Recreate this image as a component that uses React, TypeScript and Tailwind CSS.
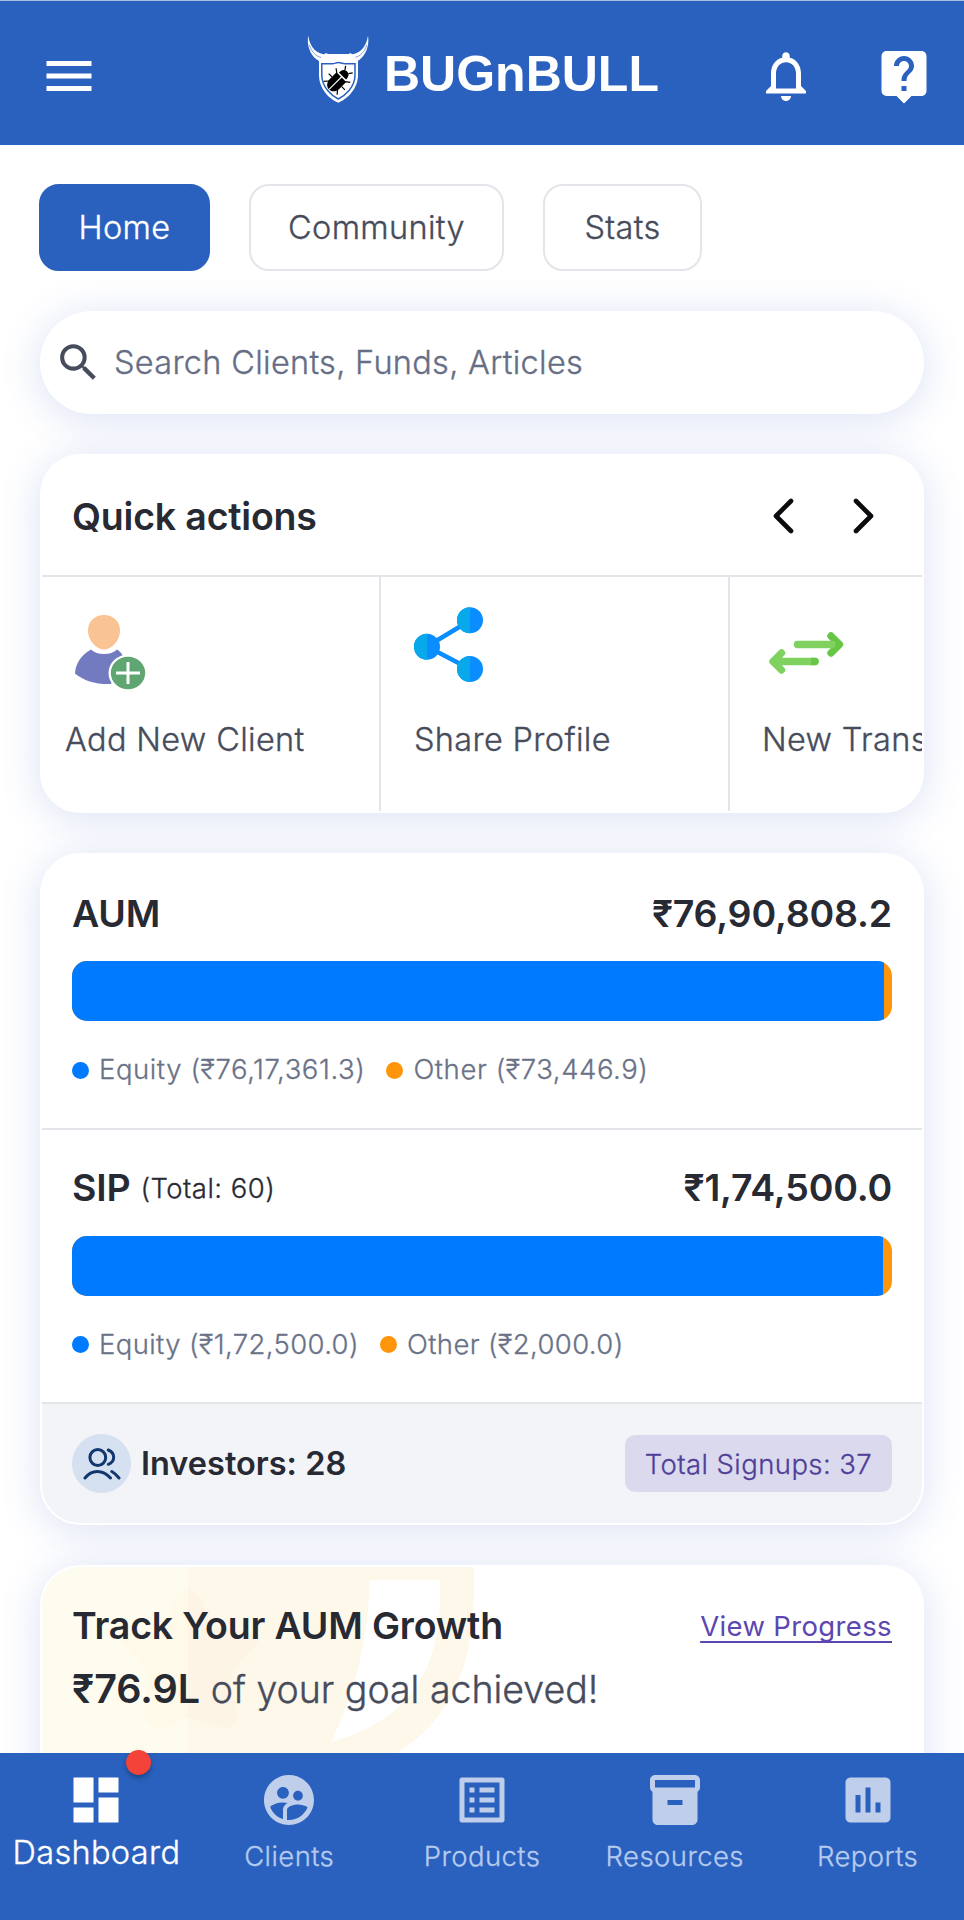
import type { ReactNode } from "react";
import {
  MdAssessment,
  MdDashboard,
  MdInventory2,
  MdListAlt,
  MdLiveHelp,
  MdMenu,
  MdNotificationsNone,
  MdSearch,
  MdSupervisedUserCircle,
} from "react-icons/md";

function BullLogo() {
  return (
    <svg className="mb-[12px] h-[70px] w-[62px] shrink-0" viewBox="0 0 62 70" fill="none">
      <path d="M1.200 .8C-.4 10 3 22 13 26.500L20 19.500C10 19.500 3 13 1.200.8Z" fill="#fff" />
      <path d="M61 .8C62.600 10 59 22 49.500 26.500L42.500 19.500C52 19.500 59.200 13 61 .8Z" fill="#fff" />
      <path d="M2.500 10C4.500 17 9 21.500 14.500 22.500M59.700 10C57.700 17 53 21.500 47.700 22.500" stroke="#2a61be" strokeWidth=".6" />
      <path d="M17 19.500L19 18 21 19H41.500L43.500 18 45.500 19.500 51 25V40C51 55 38.500 65 31.300 67.700 24 65 12 55 12 40V25Z" fill="#fff" />
      <path
        d="M14.800 28.800H25C28 28.800 29 27.500 31.300 27.500S35 28.800 38 28.800H48V40C48 52.500 37.500 61 31.300 64 25 61 14.800 52.500 14.800 40Z"
        stroke="#2a61be"
        strokeWidth="1.500"
      />
      <g transform="translate(30.500 46) rotate(45)">
        <path
          d="M-6-5L-10-8M-7 1H-11.500M-6 6L-9.500 10M6-5L10-8M7 1H11.500M6 6L9.500 10M-2.500-13L-5-16.500M2.500-13L5-16.500"
          stroke="#000"
          strokeWidth="1.200"
        />
        <path d="M-6.800-5.500H6.800V4C6.800 9 3.500 12 0 12S-6.800 9-6.800 4Z" fill="#000" />
        <path d="M-5-7C-5-11.500-3-13.500 0-13.500S5-11.500 5-7Z" fill="#000" />
        <path d="M0-6V12" stroke="#fff" strokeWidth="1.100" />
      </g>
    </svg>
  );
}

function AddClientIcon() {
  return (
    <svg className="h-[76px] w-[72px]" viewBox="0 0 72 76">
      <path d="M16 34.500C6 40 .5 49 0 58.500 9 66 21 69.500 36 69L48 41C46.500 38 44.500 36 42 34.500 36 40.500 22 40.500 16 34.500Z" fill="#727bc0" />
      <path d="M29 0C38 0 45 6 45 15.500S37 34.500 29 34.500 13 25 13 15.500 20 0 29 0Z" fill="#f9c394" />
      <ellipse cx="53" cy="58" rx="19.500" ry="18.500" fill="#fff" />
      <ellipse cx="53" cy="58" rx="17.200" ry="16.200" fill="#5fa673" />
      <path d="M53 47V69M41 58H65" stroke="#fff" strokeWidth="3" />
    </svg>
  );
}

function ShareIcon() {
  return (
    <svg className="h-[76px] w-[70px]" viewBox="0 0 70 76">
      <path d="M13 39.500L56 13.500M13 39.500L56 62" stroke="#0a8dff" strokeWidth="4.500" />
      <g fill="#0a8dff">
        <circle cx="13" cy="39.700" r="13" />
        <circle cx="56" cy="13.300" r="13" />
        <circle cx="56" cy="62" r="13" />
      </g>
      <path d="M13 26.700a13 13 0 0 0 0 26ZM56 .3a13 13 0 0 0 0 26ZM56 49a13 13 0 0 0 0 26Z" fill="#08a9ea" />
    </svg>
  );
}

function TransferIcon() {
  return (
    <svg className="h-[42px] w-[76px]" viewBox="0 0 76 42" fill="none" strokeWidth="7.400" strokeLinecap="round" strokeLinejoin="round">
      <path d="M62 4L70.500 12.500L62 21" stroke="#67c744" />
      <path d="M28.500 12.500H63" stroke="#7fd160" />
      <path d="M12.500 21L4 29.500L12.500 38M6 29.500H46" stroke="#7fd160" />
      <path d="M42 25.800H46A3.700 3.700 0 0 1 46 33.200H42Z" fill="#67c744" stroke="none" />
    </svg>
  );
}

function InvestorsIcon() {
  return (
    <svg className="h-[34px] w-[38px]" viewBox="0 0 38 34" fill="none" stroke="#12376f" strokeWidth="3" strokeLinecap="round">
      <circle cx="14.800" cy="10.500" r="7.900" />
      <path d="M25.300 3C32.500 6 32.500 14.500 25.300 17.300M2 31C8.500 22.500 19.500 22 27.500 31M28.800 24.500C31.500 26 34 28.500 36 31" />
    </svg>
  );
}

function Watermark() {
  return (
    <svg className="absolute left-[-2px] top-0 h-[188px] w-[440px]" viewBox="0 0 440 188">
      <path d="M0 0H148V188H0Z" fill="#fefcee" />
      <path d="M148 0H434C435 75 427 143 354 188H148Z" fill="#fef8eb" />
      <path d="M148 20C132 27 130 42 126 60C100 62 78 64 80 74C92 90 110 100 108 118C100 140 104 160 118 161C130 160 140 152 148 150Z" fill="#fef9e9" />
      <path d="M148 20C162 27 166 42 170 60C196 62 222 64 218 76C206 92 190 100 190 118C196 140 204 158 188 161C168 160 158 152 148 150Z" fill="#fdf4e6" />
      <path d="M330 13H400C402 85 385 149 291 175C314 128 327 80 330 13Z" fill="#fff" />
    </svg>
  );
}

function Card({ className, children }: { className: string; children: ReactNode }) {
  return (
    <section className={`rounded-[40px] bg-white p-[2px] shadow-[0_5px_40px_rgba(64,98,200,0.19)] ${className}`}>
      <div className="relative h-full overflow-hidden rounded-[38px]">{children}</div>
    </section>
  );
}

function Tab({ label, width, active }: { label: string; width: string; active?: boolean }) {
  return (
    <button
      className={`flex h-[87px] items-center justify-center rounded-[20px] border-2 pt-[2px] text-[32.5px] font-light tracking-[0.01em] [-webkit-text-stroke:0.35px] ${width} ${
        active ? "border-[#2a61be] bg-[#2a61be] text-white" : "border-[#e4e5eb] bg-white text-[#474c5c]"
      }`}
    >
      {label}
    </button>
  );
}

function QuickAction({ label, icon, last, inset }: { label: string; icon: ReactNode; last?: boolean; inset: string }) {
  return (
    <div className={`flex h-full shrink-0 flex-col ${inset} ${last ? "" : "border-r-2 border-[#e4e5eb]"}`}>
      <div className="flex h-[141px] flex-col">{icon}</div>
      <span className="whitespace-nowrap text-[32.5px] font-light leading-[44px] tracking-[0.01em] text-[#474c5c] [-webkit-text-stroke:0.35px]">
        {label}
      </span>
    </div>
  );
}

interface BreakdownProps {
  title: string;
  note?: string;
  total: string;
  share: number;
  equity: string;
  other: string;
  legendClass: string;
}

function Breakdown({ title, note, total, share, equity, other, legendClass }: BreakdownProps) {
  return (
    <div className="flex h-[274.5px] flex-col border-b-2 border-[#e4e5eb] px-[30px] pt-[36px]">
      <div className="flex h-[46px] items-center justify-between text-[37.5px] font-semibold tracking-[-0.005em] text-[#272933]">
        <div className="flex items-center">
          <span>{title}</span>
          {note && (
            <span className="ml-[10px] pt-px text-[27.5px] font-light tracking-[0.017em] [-webkit-text-stroke:0.3px]">{note}</span>
          )}
        </div>
        <span>{total}</span>
      </div>
      <div className="mt-[24px] flex h-[60px] shrink-0 overflow-hidden rounded-[15px] bg-[#ff950a]">
        <div className="h-full bg-[#007aff]" style={{ width: `${share}%` }} />
      </div>
      <div
        className={`mt-[31px] flex h-[36px] items-center whitespace-nowrap text-[27.5px] font-light text-[#6a7287] [-webkit-text-stroke:0.3px] ${legendClass}`}
      >
        <span className="mr-[10px] size-[17px] rounded-full bg-[#007aff]" />
        <span>{equity}</span>
        <span className="ml-[21px] mr-[10px] size-[17px] rounded-full bg-[#ff950a]" />
        <span>{other}</span>
      </div>
    </div>
  );
}

function NavItem({ icon, label }: { icon: ReactNode; label: string }) {
  return (
    <a className="flex flex-1 flex-col items-center pt-[17px] text-[27.5px] font-light leading-[34px] tracking-[0.015em] text-[#b6caee] [-webkit-text-stroke:0.3px]">
      <span className="text-[60px] text-[#bfcfeb] [-webkit-text-stroke:0px]">{icon}</span>
      <span className="mt-[9px]">{label}</span>
    </a>
  );
}

export default function App() {
  return (
    <div className="flex h-[1920px] w-[964px] flex-col overflow-hidden bg-white font-['Inter',sans-serif]">
      <header className="flex h-[145px] shrink-0 items-center border-t border-[#a9c0e5] bg-[#2a61be] pl-[39px] pr-[29px] pt-[5px] text-[60px] text-white">
        <MdMenu />
        <div className="ml-[208px] flex items-center">
          <BullLogo />
          <span className="mb-[3px] ml-[15px] font-['Liberation_Sans',Arial,sans-serif] text-[50px] font-bold leading-[60px]">BUGnBULL</span>
        </div>
        <MdNotificationsNone className="ml-auto" />
        <MdLiveHelp className="ml-[58px] mr-px" />
      </header>

      <main className="flex min-h-0 flex-1 flex-col px-[40px]">
        <div className="-ml-px mt-[39px] flex shrink-0 gap-[39px]">
          <Tab label="Home" width="w-[171px]" active />
          <Tab label="Community" width="w-[255px]" />
          <Tab label="Stats" width="w-[159px]" />
        </div>

        <div className="mt-[40px] flex h-[103px] shrink-0 items-center rounded-full bg-white pl-[14px] shadow-[0_5px_40px_rgba(64,98,200,0.19)]">
          <MdSearch className="text-[49px] text-[#474c5c]" />
          <span className="ml-[11px] pt-[2px] text-[32.5px] font-light tracking-[0.009em] text-[#666e85] [-webkit-text-stroke:0.35px]">
            Search Clients, Funds, Articles
          </span>
        </div>

        <Card className="mt-[40px] h-[359px] shrink-0">
          <div className="flex h-[121px] items-center justify-between border-b-2 border-[#e4e5eb] pl-[30px] pr-[48px]">
            <h2 className="pt-[3px] text-[37.5px] font-semibold tracking-[-0.005em] text-[#272933]">Quick actions</h2>
            <div className="flex gap-[59px]">
              <svg className="h-[36px] w-[21px]" viewBox="0 0 21 36" fill="none" stroke="#0b0b10" strokeWidth="4.600" strokeLinecap="round" strokeLinejoin="round">
                <path d="M18 3L3 18L18 33" />
              </svg>
              <svg className="h-[36px] w-[21px]" viewBox="0 0 21 36" fill="none" stroke="#0b0b10" strokeWidth="4.600" strokeLinecap="round" strokeLinejoin="round">
                <path d="M3 3L18 18L3 33" />
              </svg>
            </div>
          </div>
          <div className="flex h-[234px]">
            <QuickAction label="Add New Client" inset="w-[339px] pl-[23px]" icon={<div className="pl-[10px] pt-[38px]"><AddClientIcon /></div>} />
            <QuickAction label="Share Profile" inset="w-[349px] pl-[33px]" icon={<div className="pt-[30px]"><ShareIcon /></div>} />
            <QuickAction label="New Transaction" inset="w-[349px] pl-[32px]" icon={<div className="pl-[7px] pt-[55px]"><TransferIcon /></div>} last />
          </div>
        </Card>

        <Card className="mt-[40px] h-[672px] shrink-0">
          <Breakdown
            title="AUM"
            total="₹76,90,808.2"
            share={99.04}
            equity="Equity (₹76,17,361.3)"
            other="Other (₹73,446.9)"
            legendClass="tracking-[0.021em]"
          />
          <Breakdown
            title="SIP"
            note="(Total: 60)"
            total="₹1,74,500.0"
            share={98.85}
            equity="Equity (₹1,72,500.0)"
            other="Other (₹2,000.0)"
            legendClass="tracking-[0.014em]"
          />
          <div className="flex h-[119px] items-center justify-between bg-[#f3f4f8] px-[30px]">
            <div className="flex items-center">
              <span className="flex size-[59px] items-center justify-center rounded-full bg-[#d5e0f1]">
                <InvestorsIcon />
              </span>
              <span className="ml-[10px] pt-[2px] text-[32.5px] font-semibold text-[#272933]">Investors: 28</span>
            </div>
            <span className="flex h-[57px] w-[267px] items-center justify-center rounded-[10px] bg-[#dbd9ee] pt-[2px] text-[27.5px] font-light tracking-[0.015em] text-[#4f3f97] [-webkit-text-stroke:0.3px]">
              Total Signups: 37
            </span>
          </div>
        </Card>

        <Card className="mt-[40px] h-[400px] shrink-0">
          <Watermark />
          <div className="relative px-[30px] pt-[36px]">
            <div className="flex h-[46px] items-center justify-between">
              <h2 className="text-[37.5px] font-semibold tracking-[-0.005em] text-[#272933]">Track Your AUM Growth</h2>
              <a className="pt-[2px] text-[27.5px] tracking-[0.013em] text-[#5c47b0] underline decoration-2 underline-offset-[4.5px] [text-decoration-skip-ink:none]">View Progress</a>
            </div>
            <p className="mt-[18px] text-[37.5px] font-light leading-[46px] text-[#474c5c]">
              <span className="text-[39.5px] font-semibold leading-[40px] text-[#272933]">₹76.9L</span>
              <span className="[-webkit-text-stroke:0.4px]"> of your goal achieved!</span>
            </p>
          </div>
        </Card>
      </main>

      <nav className="relative z-10 flex h-[167px] shrink-0 bg-[#2a61be]">
        <a className="relative flex flex-1 flex-col items-center pt-[17px] text-[32.5px] font-light leading-[40px] tracking-[0.01em] text-white">
          <MdDashboard className="text-[60px]" />
          <span className="mt-[3px] [-webkit-text-stroke:0.35px]">Dashboard</span>
          <span className="absolute left-[126px] top-[-3px] size-[25px] rounded-full bg-[#f4443a] shadow-[0_3px_5px_rgba(0,0,0,0.3)]" />
        </a>
        <NavItem icon={<MdSupervisedUserCircle />} label="Clients" />
        <NavItem icon={<MdListAlt />} label="Products" />
        <NavItem icon={<MdInventory2 />} label="Resources" />
        <NavItem icon={<MdAssessment />} label="Reports" />
      </nav>
    </div>
  );
}
